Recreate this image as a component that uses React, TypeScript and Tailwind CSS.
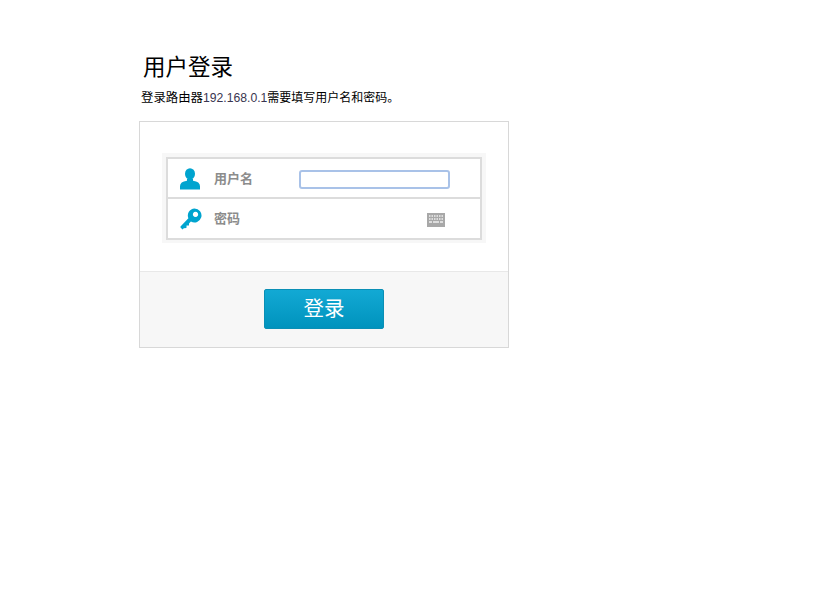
export default function App() {
  return (
    <div className="min-h-[589px] bg-white pl-[139px] pt-[52px] font-['Liberation_Sans','Noto_Sans_CJK_SC',sans-serif]">
      <h1 className="ml-[4px] pt-[1px] h-[30px] text-[22.5px] leading-[30px] font-normal text-black">用户登录</h1>
      <p className="ml-[2px] mt-[6px] h-[20px] text-[12.4px] leading-[20px] text-black">
        登录路由器<span className="text-[12.2px] text-[#3a3550]">192.168.0.1</span><span className="text-[12px]">需要填写用户名和密码。</span>
      </p>
      <div className="mt-[13px] w-[370px] h-[227px] border border-[#d8d8d8] flex flex-col">
        <div className="h-[150px] pt-[31px] pl-[22px] border-b border-[#e8e8e8]">
          <div className="w-[324px] h-[90px] border-[4px] border-[#f7f7f7]">
            <div className="h-[83px] w-[316px] border-2 border-[#dcdcdc] flex flex-col">
              <div className="h-[40px] pt-[2px] border-b-2 border-[#dcdcdc] flex items-center">
                <svg className="ml-[12px] w-[20px] h-[22px]" viewBox="0 0 20 24" preserveAspectRatio="none">
                  <ellipse cx="10" cy="6.5" rx="5" ry="6.3" fill="#00a4cf" />
                  <path d="M7 12 L13 12 L13 14 Q20 15 20 20 L20 23.5 L0 23.5 L0 20 Q0 15 7 14 Z" fill="#00a4cf" />
                </svg>
                <span className="ml-[14px] w-[85px] text-[13px] font-bold text-[#8c8c8c]">用户名</span>
                <input className="w-[151px] h-[19px] rounded-[3px] border-2 border-[#a9c2e8] outline-none bg-white" />
              </div>
              <div className="flex-1 pt-[1px] flex items-center">
                <svg className="ml-[12px] w-[22px] h-[22px]" viewBox="0 0 22 22">
                  <path fillRule="evenodd" d="M14.5 0.5a7 7 0 1 1-3.6 13L9 15.4l0 2.2-2.4 0-0.2 2.4-2.6 0.2-1.3 1.4-2-2 0-1.2L8.4 10.3A7 7 0 0 1 14.5 0.5ZM15.5 3.8a2.6 2.6 0 1 0 0.01 0Z" fill="#00a4cf" />
                </svg>
                <span className="ml-[12px] w-[213px] text-[13px] font-bold text-[#8c8c8c]">密码</span>
                <svg className="mt-[1px] w-[18px] h-[14px]" viewBox="0 0 18 14">
                  <rect width="18" height="14" fill="#a8a8a8" />
                  <path d="M2 3h14M2 6h14" stroke="#eeeeee" strokeWidth="1.5" strokeDasharray="1.5 1" />
                  <path d="M2 9h3M6 9h6M13 9h3" stroke="#eeeeee" strokeWidth="1.5" />
                </svg>
              </div>
            </div>
          </div>
        </div>
        <div className="flex-1 bg-[#f7f7f7] flex justify-center pt-[17px]">
          <button className="w-[120px] h-[40px] rounded-[2px] border border-[#0a8fb5] bg-gradient-to-b from-[#12a9d4] to-[#0093bd] text-white text-[20.5px] font-normal leading-[38px]">
            登录
          </button>
        </div>
      </div>
    </div>
  );
}
